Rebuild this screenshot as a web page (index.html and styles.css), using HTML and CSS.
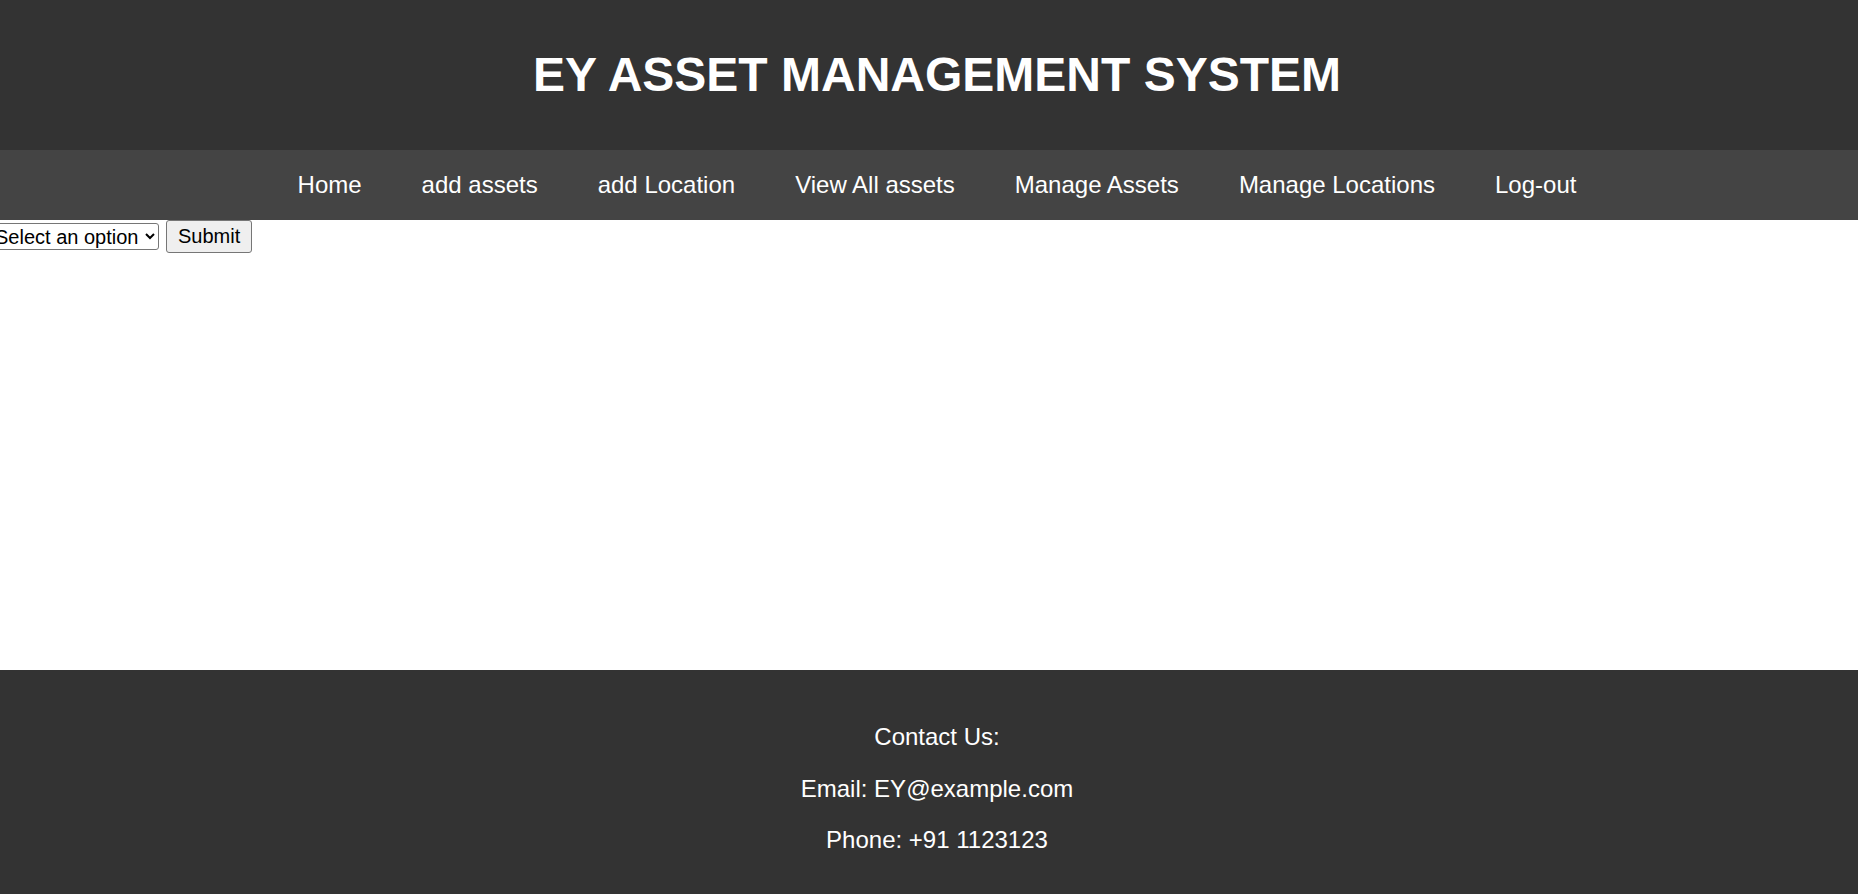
FILE: index.html
```html
<!DOCTYPE html>
<html lang="en">
<head>
<meta charset="utf-8">
<title>EY Asset Management System</title>
<link rel="stylesheet" href="styles.css">
</head>
<body>
<header class="site-header">
  <h1 class="site-title">EY ASSET MANAGEMENT SYSTEM</h1>
</header>
<nav class="site-nav">
  <a href="#">Home</a>
  <a href="#">add assets</a>
  <a href="#">add Location</a>
  <a href="#">View All assets</a>
  <a href="#">Manage Assets</a>
  <a href="#">Manage Locations</a>
  <a href="#">Log-out</a>
</nav>
<main class="content">
  <form class="picker">
    <select class="picker-select">
      <option>Select an option</option>
    </select>
    <button type="button" class="picker-btn">Submit</button>
  </form>
</main>
<footer class="site-footer">
  <p>Contact Us:</p>
  <p>Email: EY@example.com</p>
  <p>Phone: +91 1123123</p>
</footer>
</body>
</html>
```
FILE: styles.css
```css
html, body {
  margin: 0;
  padding: 0;
}
body {
  font-family: "Liberation Sans", Arial, sans-serif;
  font-size: 24px;
  background: #ffffff;
  color: #000;
}
.site-header {
  background: #333333;
  color: #ffffff;
  text-align: center;
  padding: 15px 0 15px 16px;
}
.site-title {
  margin: 32px 0;
  font-size: 48px;
  line-height: 56px;
  font-weight: bold;
}
.site-nav {
  background: #444444;
  display: flex;
  justify-content: center;
  gap: 60px;
  padding: 21px 0 21px 16px;
  line-height: 28px;
}
.site-nav a {
  color: #ffffff;
  text-decoration: none;
  font-size: 24px;
}
.content {
  height: 450px;
}
.picker {
  display: flex;
  align-items: center;
  gap: 7px;
  margin: 0;
}
.picker-select {
  font-family: "Liberation Sans", Arial, sans-serif;
  font-size: 20px;
  height: 27px;
  margin-left: -12px;
  border: 1px solid #767676;
  border-radius: 3px;
  background: #ffffff;
  color: #000;
  padding: 0 3px 0 2px;
}
.picker-btn {
  font-family: "Liberation Sans", Arial, sans-serif;
  font-size: 20px;
  height: 33px;
  padding: 0 11px;
  border: 1px solid #767676;
  border-radius: 3px;
  background: #efefef;
  color: #000;
}
.site-footer {
  background: #333333;
  color: #ffffff;
  text-align: center;
  padding: 29px 0 30px 16px;
}
.site-footer p {
  margin: 24px 0;
  line-height: 27.6px;
}
```
